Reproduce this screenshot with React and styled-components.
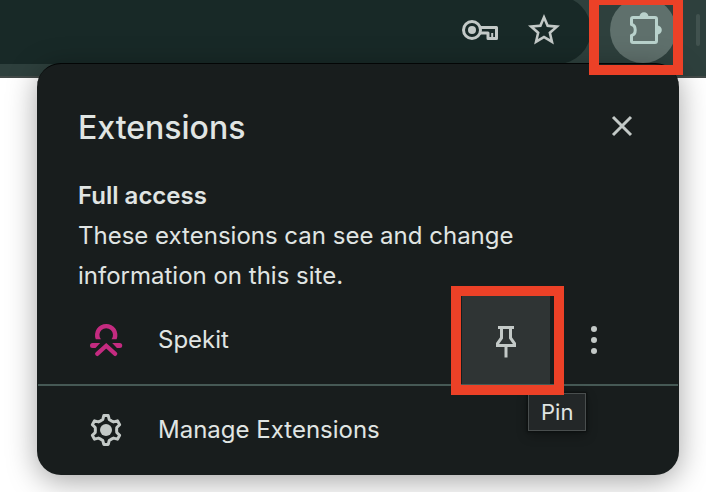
import React from 'react';
import styled, { createGlobalStyle } from 'styled-components';

const GlobalStyle = createGlobalStyle`
  * {
    box-sizing: border-box;
  }
  body {
    margin: 0;
    background: #ffffff;
    color: #e0e5e3;
    font-family: Inter, "Liberation Sans", sans-serif;
    font-size: 24px;
    line-height: 40px;
    overflow-x: hidden;
  }
  button {
    padding: 0;
    border: 0;
    background: none;
    color: inherit;
    font: inherit;
    cursor: pointer;
  }
  svg {
    display: block;
    flex: none;
    overflow: visible;
  }
`

const Toolbar = styled.header`
  display: flex;
  align-items: flex-start;
  height: 82px;
  margin-top: -4px;
  background: #2e403d;
  border-bottom: 2px solid #424a48;
`

const AddressBar = styled.div`
  flex: 1;
  display: flex;
  align-items: center;
  justify-content: flex-end;
  gap: 32px;
  height: 68px;
  padding-right: 31px;
  border-radius: 0 34px 34px 0;
  background: #182927;
  color: #c3c9c7;
`

const IconButton = styled.button`
  display: flex;
  align-items: center;
  justify-content: center;
  width: ${props => props.$width || 32}px;
  height: ${props => props.$height || 32}px;
  background: ${props => (props.$active ? '#2f3434' : 'none')};
  color: #c3c9c7;
`

const ToolbarEnd = styled.div`
  display: flex;
  align-items: center;
  gap: 20px;
  height: 68px;
  padding: 0 6px 0 19px;
`

const Anchor = styled.div`
  position: relative;
`

const PuzzleButton = styled(IconButton)`
  border-radius: 50%;
  background: #5f706c;
  color: #b9d2cc;
`

const Separator = styled.div`
  width: 4px;
  height: 32px;
  border-radius: 2px;
  background: #41524f;
`

const Highlight = styled.div`
  position: absolute;
  z-index: 3;
  top: ${props => props.$top}px;
  left: ${props => props.$left}px;
  width: ${props => props.$width}px;
  height: ${props => props.$height}px;
  border: 10px solid #ec4127;
  pointer-events: none;
`

const Panel = styled.section`
  position: relative;
  z-index: 1;
  margin: -15px 27px 17px 37px;
  padding-bottom: 1px;
  border-top: 1px solid #030505;
  border-radius: 24px;
  background: #181d1d;
  box-shadow: 0 6px 30px rgba(0, 0, 0, 0.36);
`

const PanelHeader = styled.div`
  display: flex;
  align-items: flex-start;
  justify-content: space-between;
  padding: 44px 41px 28px;
`

const Title = styled.h1`
  margin: 0;
  font-size: 32px;
  font-weight: 500;
`

const Access = styled.div`
  padding: 0 41px;
`

const Subtitle = styled.h2`
  margin: 0;
  font-size: 24px;
  font-weight: 600;
`

const Description = styled.p`
  max-width: 480px;
  margin: 0;
`

const Row = styled.div`
  display: flex;
  align-items: center;
  height: 88px;
  padding: 0 41px;
`

const RowButton = styled.button`
  flex: 1;
  display: flex;
  align-items: center;
  gap: 36px;
  height: 88px;
  padding-left: 12px;
  text-align: left;
`

const Divider = styled.hr`
  height: 2px;
  margin: 0 1px;
  border: 0;
  background: #465955;
`

const Tooltip = styled.div`
  position: absolute;
  z-index: 2;
  top: 97px;
  left: 66px;
  padding: 0 12px;
  border: 1px solid #494e4e;
  background: #232728;
  box-shadow: 0 0 2px 1px #0c0f0f, 0 4px 12px rgba(0, 0, 0, 0.3);
  font-size: 22px;
  line-height: 36px;
`

const KeyIcon = () => (
  <svg width="36" height="20" viewBox="0 0 36 20" fill="none" stroke="currentColor" strokeWidth="3">
    <circle cx="10" cy="10" r="8.5" />
    <circle cx="10" cy="10" r="4" fill="currentColor" stroke="none" />
    <path d="M18 7.5H34.5V18.5H26V13H18" strokeLinejoin="round" />
    <path d="M30.2 13v4" strokeWidth="2" />
  </svg>
)

const StarIcon = () => (
  <svg width="32" height="32" viewBox="2 2 20 20" fill="currentColor">
    <path d="M22 9.24l-7.19-.62L12 2 9.19 8.63 2 9.24l5.46 4.73L5.82 21 12 17.27 18.18 21l-1.63-7.03L22 9.24zM12 15.4l-3.76 2.27 1-4.28-3.32-2.88 4.38-.38L12 6.1l1.71 4.04 4.38.38-3.32 2.88 1 4.28L12 15.4z" />
  </svg>
)

const PuzzleIcon = () => (
  <svg width="36" height="36" viewBox="0 0 36 36" fill="none" stroke="currentColor" strokeWidth="3">
    <path
      d="M8 5.5H30Q31.5 5.5 31.5 7V29Q31.5 30.5 30 30.5H8Q6.5 30.5 6.5 29V23.5A4.6 5.6 0 0 0 6.5 12.5V7Q6.5 5.5 8 5.5Z"
      strokeLinejoin="round"
    />
    <path d="M14.5 5A4.5 4.8 0 0 1 23.5 5ZM32 13.5A4.8 4.5 0 0 1 32 22.5Z" fill="currentColor" stroke="none" />
  </svg>
)

const CloseIcon = () => (
  <svg width="20" height="20" viewBox="0 0 20 20" stroke="currentColor" strokeWidth="3">
    <path d="M1 1L19 19M19 1L1 19" />
  </svg>
)

const SpekitIcon = () => (
  <svg width="32" height="32" viewBox="0 0 32 32" fill="#c42b80">
    <path d="M5.8 15.3A11.2 11.2 0 1 1 26.6 15.3H21.5A6.8 6.8 0 1 0 10.9 15.3Z" />
    <path d="M2.5 19H10.2L5.5 24H2.5A2.5 2.5 0 0 1 2.5 19Z" />
    <path d="M29.7 19H22.2L26.9 24H29.7A2.5 2.5 0 0 0 29.7 19Z" />
    <path d="M7.2 29.9L16.2 21.8L25.2 29.9" fill="none" stroke="#c42b80" strokeWidth="4.2" strokeLinecap="round" />
  </svg>
)

const PinIcon = () => (
  <svg width="20" height="36" viewBox="0 0 20 36" fill="none" stroke="currentColor" strokeWidth="3">
    <path d="M2 5.5H18" />
    <path d="M5.5 5.5V16L1.5 21.5V23.5H18.5V21.5L14.5 16V5.5" />
    <path d="M10 23.5V35.5" />
  </svg>
)

const MoreIcon = () => (
  <svg width="8" height="32" viewBox="0 0 8 32" fill="currentColor">
    <circle cx="4" cy="5" r="3" />
    <circle cx="4" cy="16" r="3" />
    <circle cx="4" cy="27" r="3" />
  </svg>
)

// one tooth, repeated every 60 degrees
const tooth = [[-3.2, -10.6], [-2.2, -14.5], [2.2, -14.5], [3.2, -10.6], [5.3, -9.2]]
const gearPoints = [0, 1, 2, 3, 4, 5].map(i => {
  const a = (i * Math.PI) / 3
  return tooth
    .map(([x, y]) => `${16 + x * Math.cos(a) - y * Math.sin(a)},${16 + x * Math.sin(a) + y * Math.cos(a)}`)
    .join(' ')
}).join(' ')

const GearIcon = () => (
  <svg width="32" height="32" viewBox="0 0 32 32" fill="none" stroke="#c3c9c7" strokeWidth="3">
    <polygon points={gearPoints} strokeLinejoin="round" />
    <circle cx="16" cy="16" r="6" fill="#c3c9c7" stroke="none" />
  </svg>
)

const App = () => {
  return (
    <>
      <GlobalStyle />
      <Toolbar>
        <AddressBar>
          <IconButton aria-label="Passwords"><KeyIcon /></IconButton>
          <IconButton aria-label="Bookmark"><StarIcon /></IconButton>
        </AddressBar>
        <ToolbarEnd>
          <Anchor>
            <PuzzleButton $width={66} $height={66} aria-label="Extensions"><PuzzleIcon /></PuzzleButton>
            <Highlight $top={-2} $left={-21} $width={94} $height={80} />
          </Anchor>
          <Separator />
        </ToolbarEnd>
      </Toolbar>
      <Panel>
        <PanelHeader>
          <Title>Extensions</Title>
          <IconButton $height={36} aria-label="Close"><CloseIcon /></IconButton>
        </PanelHeader>
        <Access>
          <Subtitle>Full access</Subtitle>
          <Description>These extensions can see and change information on this site.</Description>
        </Access>
        <Row>
          <RowButton><SpekitIcon />Spekit</RowButton>
          <Anchor>
            <IconButton $width={88} $height={88} $active aria-label="Pin"><PinIcon /></IconButton>
            <Highlight $top={-10} $left={-11} $width={113} $height={109} />
            <Tooltip role="tooltip">Pin</Tooltip>
          </Anchor>
          <IconButton $width={88} $height={88} aria-label="More options"><MoreIcon /></IconButton>
        </Row>
        <Divider />
        <Row>
          <RowButton><GearIcon />Manage Extensions</RowButton>
        </Row>
      </Panel>
    </>
  );
}

export default App;
